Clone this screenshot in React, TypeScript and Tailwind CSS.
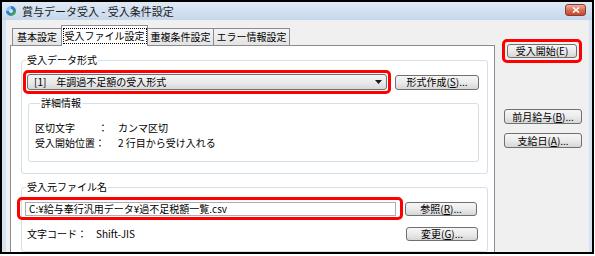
import React from 'react';

const font = "font-['Noto_Sans_CJK_JP',sans-serif]";

interface BtnProps {
  label: string;
  k: string;
  tail?: string;
  underline?: boolean;
  className?: string;
}

const Btn: React.FC<BtnProps> = ({ label, k, tail = '', underline = true, className = '' }) => (
  <div
    className={`flex items-center justify-center rounded-[3px] border border-[#707070] bg-linear-to-b from-[#f6f6f6] via-[#ebebeb] to-[#d6d6d6] text-[10px] leading-[12px] text-black ${className}`}
  >
    {label}(<span className={underline ? 'underline' : ''}>{k}</span>){tail}
  </div>
);

// red annotation frame drawn round a control
const Mark: React.FC<{ className?: string; children: React.ReactNode }> = ({ className = '', children }) => (
  <div className={`rounded-[5px] border-[3px] border-[#ff0000] ${className}`}>{children}</div>
);

const Tab: React.FC<{ label: string; className?: string }> = ({ label, className = '' }) => (
  <div
    className={`h-[17px] flex items-center justify-center border-t border-l border-r border-[#898c95] bg-linear-to-b from-[#f4f4f4] to-[#e3e3e3] text-[10px] leading-[12px] ${className}`}
  >
    {label}
  </div>
);

export default function App() {
  return (
    <div className={`w-[595px] h-[256px] bg-white text-black ${font}`}>
      <div className="w-[594px] h-[254px] border-2 border-black flex flex-col bg-[#d5e2f1] overflow-hidden">
        {/* title bar */}
        <div className="h-[18px] shrink-0 flex items-center bg-linear-to-b from-[#e0eaf6] to-[#c6d7ec]">
          <svg width="12" height="12" viewBox="0 0 12 12" className="ml-[3px]">
            <path d="M6 1 A5 5 0 0 1 11 6 L8 6 A2 2 0 0 0 6 4 Z" fill="#2f7fd0" />
            <path d="M11 6 A5 5 0 0 1 6 11 L6 8 A2 2 0 0 0 8 6 Z" fill="#43a047" />
            <path d="M6 11 A5 5 0 0 1 1 6 L4 6 A2 2 0 0 0 6 8 Z" fill="#2f7fd0" />
            <path d="M1 6 A5 5 0 0 1 6 1 L6 4 A2 2 0 0 0 4 6 Z" fill="#8cc4f0" />
          </svg>
          <span className="ml-[5px] text-[11px] leading-[13px] text-[#1b1b1b]">賞与データ受入 - 受入条件設定</span>
          <div className="ml-auto mr-[6px] self-start mt-[2px] w-[21px] h-[12px] rounded-[3px] border border-[#8d3b2c] bg-linear-to-b from-[#eab1a4] via-[#d86e55] to-[#c4462d] flex items-center justify-center">
            <svg width="8" height="6" viewBox="0 0 8 6">
              <path d="M1 0.5 L7 5.5 M7 0.5 L1 5.5" stroke="white" strokeWidth="1.6" />
            </svg>
          </div>
        </div>

        {/* client area */}
        <div className="flex-1 min-h-0 flex pl-[4px] pr-[3px]">
          <div className="flex-1 min-h-0 flex bg-[#f0f0f0] overflow-hidden">
            {/* tab control */}
            <div className="ml-[4px] w-[485px] flex flex-col">
              <div className="h-[25px] shrink-0 flex items-end pl-[2px]">
                <Tab label="基本設定" className="w-[50px]" />
                <div className="relative z-10 -mb-px -ml-px h-[21px] w-[87px] flex items-center justify-center border-t border-l border-r border-[#898c95] bg-white text-[10px] leading-[12px]">
                  <span className="border border-dotted border-black px-[1px] py-[1px]">受入ファイル設定</span>
                </div>
                <Tab label="重複条件設定" className="w-[67px] -ml-px" />
                <Tab label="エラー情報設定" className="w-[77px] -ml-px" />
              </div>

              <div className="flex-1 bg-white border-t border-l border-r border-[#898c95] flex flex-col">
                {/* 受入データ形式 */}
                <fieldset className="ml-[10px] mt-[8px] w-[467px] border border-[#d5dfe5] rounded-[3px] pb-[11px]">
                  <legend className="ml-[4px] px-[1px] text-[10px] leading-[12px]">受入データ形式</legend>
                  <div className="flex items-center mt-[4px]">
                    <Mark className="ml-[1px] w-[368px] p-[1px]">
                      <div className="h-[16px] flex items-center rounded-[3px] border border-[#707070] bg-linear-to-b from-[#f4f4f4] via-[#ebebeb] to-[#d8d8d8] pl-[6px] pr-[4px] text-[10px] leading-[12px]">
                        <span>[1]</span>
                        <span className="ml-[10px]">年調過不足額の受入形式</span>
                        <svg width="7" height="4" viewBox="0 0 7 4" className="ml-auto">
                          <path d="M0 0 H7 L3.5 4 Z" fill="#1a1a1a" />
                        </svg>
                      </div>
                    </Mark>
                    <Btn label="形式作成" k="S" tail="..." className="ml-[4px] w-[84px] h-[15px]" />
                  </div>

                  <fieldset className="ml-[6px] mt-[3px] w-[451px] border border-[#d5dfe5] rounded-[3px] pl-[6px] pb-[11px] text-[10px] leading-[15px]">
                    <legend className="ml-[5px] px-[1px] text-[10px] leading-[12px]">詳細情報</legend>
                    <div className="mt-[11px] flex">
                      <span className="w-[63px]">区切文字</span>
                      <span className="w-[20px]">：</span>
                      <span>カンマ区切</span>
                    </div>
                    <div className="flex">
                      <span className="w-[83px]">受入開始位置：</span>
                      <span>2 行目から受け入れる</span>
                    </div>
                  </fieldset>
                </fieldset>

                {/* 受入元ファイル名 */}
                <fieldset className="ml-[10px] mt-[7px] w-[467px] flex-1 border border-[#d5dfe5] rounded-[3px]">
                  <legend className="ml-[4px] px-[1px] text-[10px] leading-[12px]">受入元ファイル名</legend>
                  <div className="flex items-center mt-[4px]">
                    <Mark className="-ml-[5px] w-[386px] pl-[5px] pr-[4px] pt-[2px] pb-[1px]">
                      <div className="h-[14px] flex items-center border border-[#abadb3] bg-white pl-[3px] text-[10px] leading-[12px]">
                        C:¥給与奉行汎用データ¥過不足税額一覧.csv
                      </div>
                    </Mark>
                    <Btn label="参照" k="R" tail="..." className="ml-[2px] w-[72px] h-[14px]" />
                  </div>
                  <div className="flex items-center mt-[7px] pr-[9px]">
                    <span className="ml-[5px] text-[10px] leading-[12px]">文字コード：</span>
                    <span className="ml-[9px] text-[10px] leading-[12px]">Shift-JIS</span>
                    <Btn label="変更" k="G" tail="..." className="ml-auto w-[72px] h-[14px]" />
                  </div>
                </fieldset>
              </div>
            </div>

            {/* right buttons */}
            <div className="flex-1 flex flex-col">
              <Mark className="mt-[19px] ml-[7px] w-[80px] p-[2px]">
                <Btn label="受入開始" k="E" underline={false} className="w-[70px] h-[14px]" />
              </Mark>
              <Btn label="前月給与" k="B" tail="..." className="mt-[46px] ml-[9px] w-[78px] h-[15px]" />
              <Btn label="支給日" k="A" tail="..." className="mt-[9px] ml-[9px] w-[78px] h-[15px]" />
            </div>
          </div>
        </div>
      </div>
    </div>
  );
}
